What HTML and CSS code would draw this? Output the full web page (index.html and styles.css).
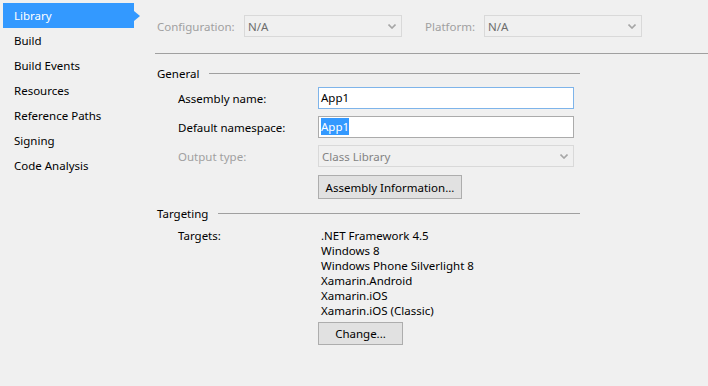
FILE: index.html
```html
<!DOCTYPE html>
<html lang="en">
<head>
    <meta charset="UTF-8">
    <title>Library Properties</title>
    <link rel="stylesheet" href="styles.css">
</head>
<body>
    <div class="page">
        <!-- Left tabs -->
        <ul class="nav">
            <li class="nav-item selected">Library</li>
            <li class="nav-item">Build</li>
            <li class="nav-item">Build Events</li>
            <li class="nav-item">Resources</li>
            <li class="nav-item">Reference Paths</li>
            <li class="nav-item">Signing</li>
            <li class="nav-item">Code Analysis</li>
        </ul>

        <div class="content">
            <div class="topbar">
                <span class="top-label config-label">Configuration:</span>
                <div class="combo disabled">
                    <span>N/A</span>
                    <svg class="chevron" width="8" height="5" viewBox="0 0 8 5"><polyline points="0.5,0.5 4,4 7.5,0.5" /></svg>
                </div>
                <span class="top-label platform-label">Platform:</span>
                <div class="combo disabled">
                    <span>N/A</span>
                    <svg class="chevron" width="8" height="5" viewBox="0 0 8 5"><polyline points="0.5,0.5 4,4 7.5,0.5" /></svg>
                </div>
            </div>

            <div class="rule"></div>

            <div class="section">
                <div class="section-head"><span>General</span><div class="head-line"></div></div>

                <div class="form-grid">
                    <label class="field-label">Assembly name:</label>
                    <div class="textbox hover">App1</div>

                    <label class="field-label">Default namespace:</label>
                    <div class="textbox"><span class="selected-text">App1</span></div>

                    <label class="field-label muted">Output type:</label>
                    <div class="combo disabled wide">
                        <span>Class Library</span>
                        <svg class="chevron" width="8" height="5" viewBox="0 0 8 5"><polyline points="0.5,0.5 4,4 7.5,0.5" /></svg>
                    </div>

                    <span></span>
                    <div><button class="btn info-btn">Assembly Information...</button></div>
                </div>

                <div class="section-head targeting-head"><span>Targeting</span><div class="head-line"></div></div>

                <div class="targets">
                    <span class="field-label">Targets:</span>
                    <div class="target-list">
                        <div>.NET Framework 4.5</div>
                        <div>Windows 8</div>
                        <div>Windows Phone Silverlight 8</div>
                        <div>Xamarin.Android</div>
                        <div>Xamarin.iOS</div>
                        <div>Xamarin.iOS (Classic)</div>
                        <button class="btn change-btn">Change...</button>
                    </div>
                </div>
            </div>
        </div>
    </div>
</body>
</html>
```

FILE: styles.css
```css
/* Page basics */
body {
    margin: 0;
    background-color: #f0f0f0;
    font-family: "Noto Sans", "Open Sans", sans-serif;
    font-size: 11.5px;
    color: #000;
}

.page {
    display: flex;
    height: 386px;
}

/* Left tab list */
.nav {
    list-style: none;
    margin: 0;
    padding: 3px 0 0 3px;
    width: 137px;
}

.nav-item {
    position: relative;
    height: 25px;
    line-height: 25px;
    padding-left: 11px;
    width: 120px;
}

.nav-item.selected {
    background-color: #3399ff;
    color: #fff;
}

/* little arrow on the selected tab */
.nav-item.selected::after {
    content: "";
    position: absolute;
    right: -6px;
    top: 8px;
    border-top: 5px solid transparent;
    border-bottom: 5px solid transparent;
    border-left: 6px solid #3399ff;
}

.content {
    flex: 1;
    padding-left: 15px;
}

/* Configuration / Platform row */
.topbar {
    display: flex;
    align-items: center;
    padding: 15px 0 0 2px;
}

.top-label {
    color: #a0a0a0;
}

.config-label {
    width: 87px;
}

.platform-label {
    width: 59px;
    margin-left: 23px;
}

.combo {
    box-sizing: border-box;
    display: flex;
    align-items: center;
    justify-content: space-between;
    width: 158px;
    height: 22px;
    padding: 0 5px 0 3px;
    border: 1px solid #d9d9d9;
    color: #6d6d6d;
}

.combo.wide {
    width: 256px;
    color: #838383;
}

.chevron polyline {
    fill: none;
    stroke: #a6a6a6;
    stroke-width: 1.6;
}

.rule {
    margin-top: 16px;
    border-top: 1px solid #a0a0a0;
}

/* Sections */
.section {
    width: 425px;
}

.section-head {
    display: flex;
    align-items: center;
    height: 16px;
    margin-top: 11px;
    padding-left: 2px;
}

.head-line {
    flex: 1;
    margin-left: 10px;
    border-top: 1px solid #a0a0a0;
}

.targeting-head {
    margin-top: 6px;
}

.form-grid {
    display: grid;
    grid-template-columns: 140px 256px;
    row-gap: 7px;
    align-items: center;
    margin-top: 6px;
    padding-left: 23px;
}

.field-label {
    color: #000;
}

.muted {
    color: #a0a0a0;
}

.textbox {
    box-sizing: border-box;
    height: 22px;
    line-height: 20px;
    padding-left: 2px;
    background-color: #fff;
    border: 1px solid #ababab;
}

.textbox.hover {
    border-color: #7eb4ea;
}

.selected-text {
    background-color: #3399ff;
    color: #fff;
    padding: 1px 0;
}

/* Buttons */
.btn {
    box-sizing: border-box;
    font-family: inherit;
    font-size: 11.5px;
    color: #000;
    background-color: #e1e1e1;
    border: 1px solid #adadad;
    padding: 0;
}

.info-btn {
    width: 144px;
    height: 24px;
    margin-top: 1px;
}

.change-btn {
    width: 85px;
    height: 23px;
    margin-top: 4px;
}

/* Targets list */
.targets {
    display: grid;
    grid-template-columns: 140px 256px;
    margin-top: 7px;
    padding-left: 23px;
    line-height: 15px;
}

.target-list div {
    padding-left: 3px;
}
```
